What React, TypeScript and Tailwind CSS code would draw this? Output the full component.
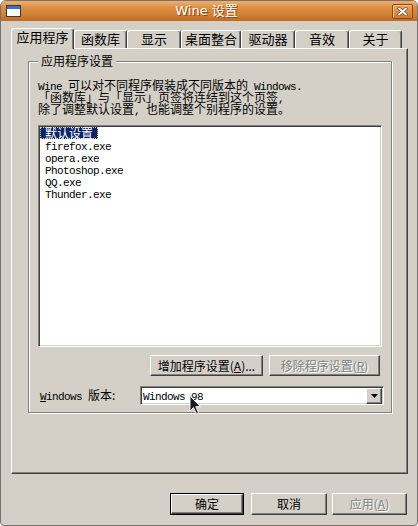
import React from "react";

// mixed text: ascii runs in mono (6px advance), CJK runs at 12px
const Sim: React.FC<{ t: string }> = ({ t }) => (
  <>
    {t
      .split(/([\x20-\x7e]+)/)
      .filter(Boolean)
      .map((s, i) =>
        /^[\x20-\x7e]+$/.test(s) ? (
          <span key={i} className="font-['Liberation_Mono',monospace] text-[11px] tracking-[-0.6px] whitespace-pre">
            {s}
          </span>
        ) : (
          <span key={i} className="font-['Noto_Sans_CJK_SC',sans-serif] text-[12px]">
            {s}
          </span>
        )
      )}
  </>
);

const tabs = [
  { label: "应用程序", w: 63 },
  { label: "函数库", w: 53 },
  { label: "显示", w: 54 },
  { label: "桌面整合", w: 60 },
  { label: "驱动器", w: 54 },
  { label: "音效", w: 54 },
  { label: "关于", w: 53 },
];

const apps = ["firefox.exe", "opera.exe", "Photoshop.exe", "QQ.exe", "Thunder.exe"];

const raised =
  "border border-t-white border-l-white border-r-[#404040] border-b-[#404040] shadow-[inset_-1px_-1px_0_#808080]";
const sunken =
  "border border-t-[#808080] border-l-[#808080] border-r-white border-b-white shadow-[inset_1px_1px_0_#404040,inset_-1px_-1px_0_#d4d0c8]";

export default function App() {
  return (
    <div className="relative w-[418px] h-[526px] overflow-hidden bg-[#d4d0c8] flex flex-col border border-[#77736c] rounded-t-[6px] rounded-b-[4px] font-['Noto_Sans_CJK_SC',sans-serif] text-[12px] leading-[12px] text-black">
      {/* title bar */}
      <div className="h-[20px] shrink-0 flex items-center pl-[5px] pr-[4px] bg-[linear-gradient(to_bottom,#eeb070,#dc8e42_35%,#cf7c30_75%,#bd6b26)]">
        <svg width="15" height="12" viewBox="0 0 15 12" className="shrink-0">
          <rect x="0.5" y="0.5" width="14" height="11" fill="#ffffff" stroke="#3a3a3a" />
          <rect x="1" y="1" width="13" height="3" fill="#3c6ec8" />
        </svg>
        <div className="flex-1 text-center text-white text-[13px] leading-[14px] font-['DejaVu_Sans','Noto_Sans_CJK_SC',sans-serif] [text-shadow:1px_1px_0_#8a4a16]">
          Wine 设置
        </div>
        <div className="w-[21px] h-[15px] rounded-[2px] border border-[#8a4a14] bg-[linear-gradient(to_bottom,#eba565,#cf7a30)] shadow-[inset_1px_1px_0_#f5c08a] flex items-center justify-center">
          <svg width="11" height="9" viewBox="0 0 11 9">
            <path d="M2 1.5 L9 7.5 M9 1.5 L2 7.5" stroke="#6b3a10" strokeWidth="3.2" strokeLinecap="round" />
            <path d="M2 1.5 L9 7.5 M9 1.5 L2 7.5" stroke="#ffffff" strokeWidth="2" strokeLinecap="round" />
          </svg>
        </div>
      </div>

      {/* tabs */}
      <div className="pl-[10px] pt-[7px]">
        <div className="flex items-end h-[20px]">
          {tabs.map((t, i) =>
            i === 0 ? (
              <div
                key={t.label}
                style={{ width: t.w }}
                className="relative z-10 -mb-px h-[21px] bg-[#d4d0c8] border-t border-l border-r border-t-white border-l-white border-r-[#404040] rounded-t-[3px] shadow-[inset_-1px_0_0_#808080] flex items-center justify-center pb-[4px] text-[13px]"
              >
                {t.label}
              </div>
            ) : (
              <div
                key={t.label}
                style={{ width: t.w }}
                className="h-[18px] border-t border-l border-r border-t-white border-l-white border-r-[#404040] rounded-t-[3px] shadow-[inset_-1px_0_0_#808080] flex items-center justify-center pb-[1px] text-[13px]"
              >
                {t.label}
              </div>
            )
          )}
        </div>

        {/* tab panel */}
        <div className="w-[397px] h-[426px] border border-t-white border-l-white border-r-[#404040] border-b-[#404040] shadow-[inset_-1px_-1px_0_#808080]">
          <div className="relative ml-[16px] mt-[12px] w-[364px] h-[352px] border border-[#808080] shadow-[inset_1px_1px_0_#fff,1px_1px_0_#fff] pl-[9px] pt-[17px]">
            <div className="absolute left-[9px] -top-[7px] px-[3px] bg-[#d4d0c8] leading-[12px]">应用程序设置</div>

            <div className="leading-[12px]">
              <div className="h-[12px] whitespace-nowrap"><Sim t="Wine 可以对不同程序假装成不同版本的 Windows." /></div>
              <div className="h-[12px] whitespace-nowrap"><Sim t="「函数库」与「显示」页签将连结到这个页签," /></div>
              <div className="h-[12px] whitespace-nowrap"><Sim t="除了调整默认设置, 也能调整个别程序的设置。" /></div>
            </div>

            {/* app list */}
            <div className={`mt-[10px] w-[344px] h-[222px] bg-white pt-[1px] pl-[1px] ${sunken}`}>
              <div className="h-[12px] leading-[10px]">
                <span className="inline-block h-[12px] px-[4px] bg-[#0a246a] text-white border border-dotted border-[#e8d080]">默认设置</span>
              </div>
              {apps.map((a) => (
                <div key={a} className="h-[12px] leading-[12px] pl-[5px] whitespace-nowrap">
                  <Sim t={a} />
                </div>
              ))}
            </div>

            <div className="mt-[8px] w-[344px] pr-[2px] flex justify-end gap-[6px]">
              <div className={`w-[113px] h-[21px] flex items-center justify-center ${raised}`}>
                增加程序设置(<span className="underline">A</span>)...
              </div>
              <div className={`w-[111px] h-[21px] flex items-center justify-center text-[#808080] [text-shadow:1px_1px_0_#fff] ${raised}`}>
                移除程序设置(<span className="underline">R</span>)
              </div>
            </div>

            <div className="mt-[10px] flex items-center h-[19px]">
              <div className="w-[102px] pl-[2px] whitespace-nowrap">
                <span className="font-['Liberation_Mono',monospace] text-[11px] tracking-[-0.6px]">
                  <span className="underline">W</span>indows{" "}
                </span>
                版本:
              </div>
              <div className={`w-[244px] h-[19px] bg-white flex items-center pl-[2px] ${sunken}`}>
                <span className="flex-1 whitespace-nowrap"><Sim t="Windows 98" /></span>
                <div className={`w-[16px] h-[16px] mr-[1px] bg-[#d4d0c8] flex items-center justify-center ${raised}`}>
                  <svg width="7" height="4" viewBox="0 0 7 4">
                    <path d="M0 0 H7 L3.5 4 Z" fill="#000" />
                  </svg>
                </div>
              </div>
            </div>
          </div>
        </div>
      </div>

      {/* dialog buttons */}
      <div className="mt-[19px] pr-[10px] flex justify-end">
        <div className="w-[74px] h-[22px] border border-black">
          <div className={`w-full h-full flex items-center justify-center ${raised}`}>确定</div>
        </div>
        <div className={`ml-[7px] w-[76px] h-[22px] flex items-center justify-center ${raised}`}>取消</div>
        <div className={`ml-[5px] w-[75px] h-[22px] flex items-center justify-center text-[#808080] [text-shadow:1px_1px_0_#fff] ${raised}`}>
          应用(<span className="underline">A</span>)
        </div>
      </div>

      {/* mouse pointer */}
      <svg className="absolute left-[188px] top-[394px]" width="13" height="21" viewBox="0 0 13 21">
        <path d="M1 1 L1 16 L4.5 12.5 L7.5 19 L9.5 18 L6.8 11.6 L11.5 11.6 Z" fill="#1a1a1a" stroke="#f0f0f0" strokeWidth="1" />
      </svg>
    </div>
  );
}
